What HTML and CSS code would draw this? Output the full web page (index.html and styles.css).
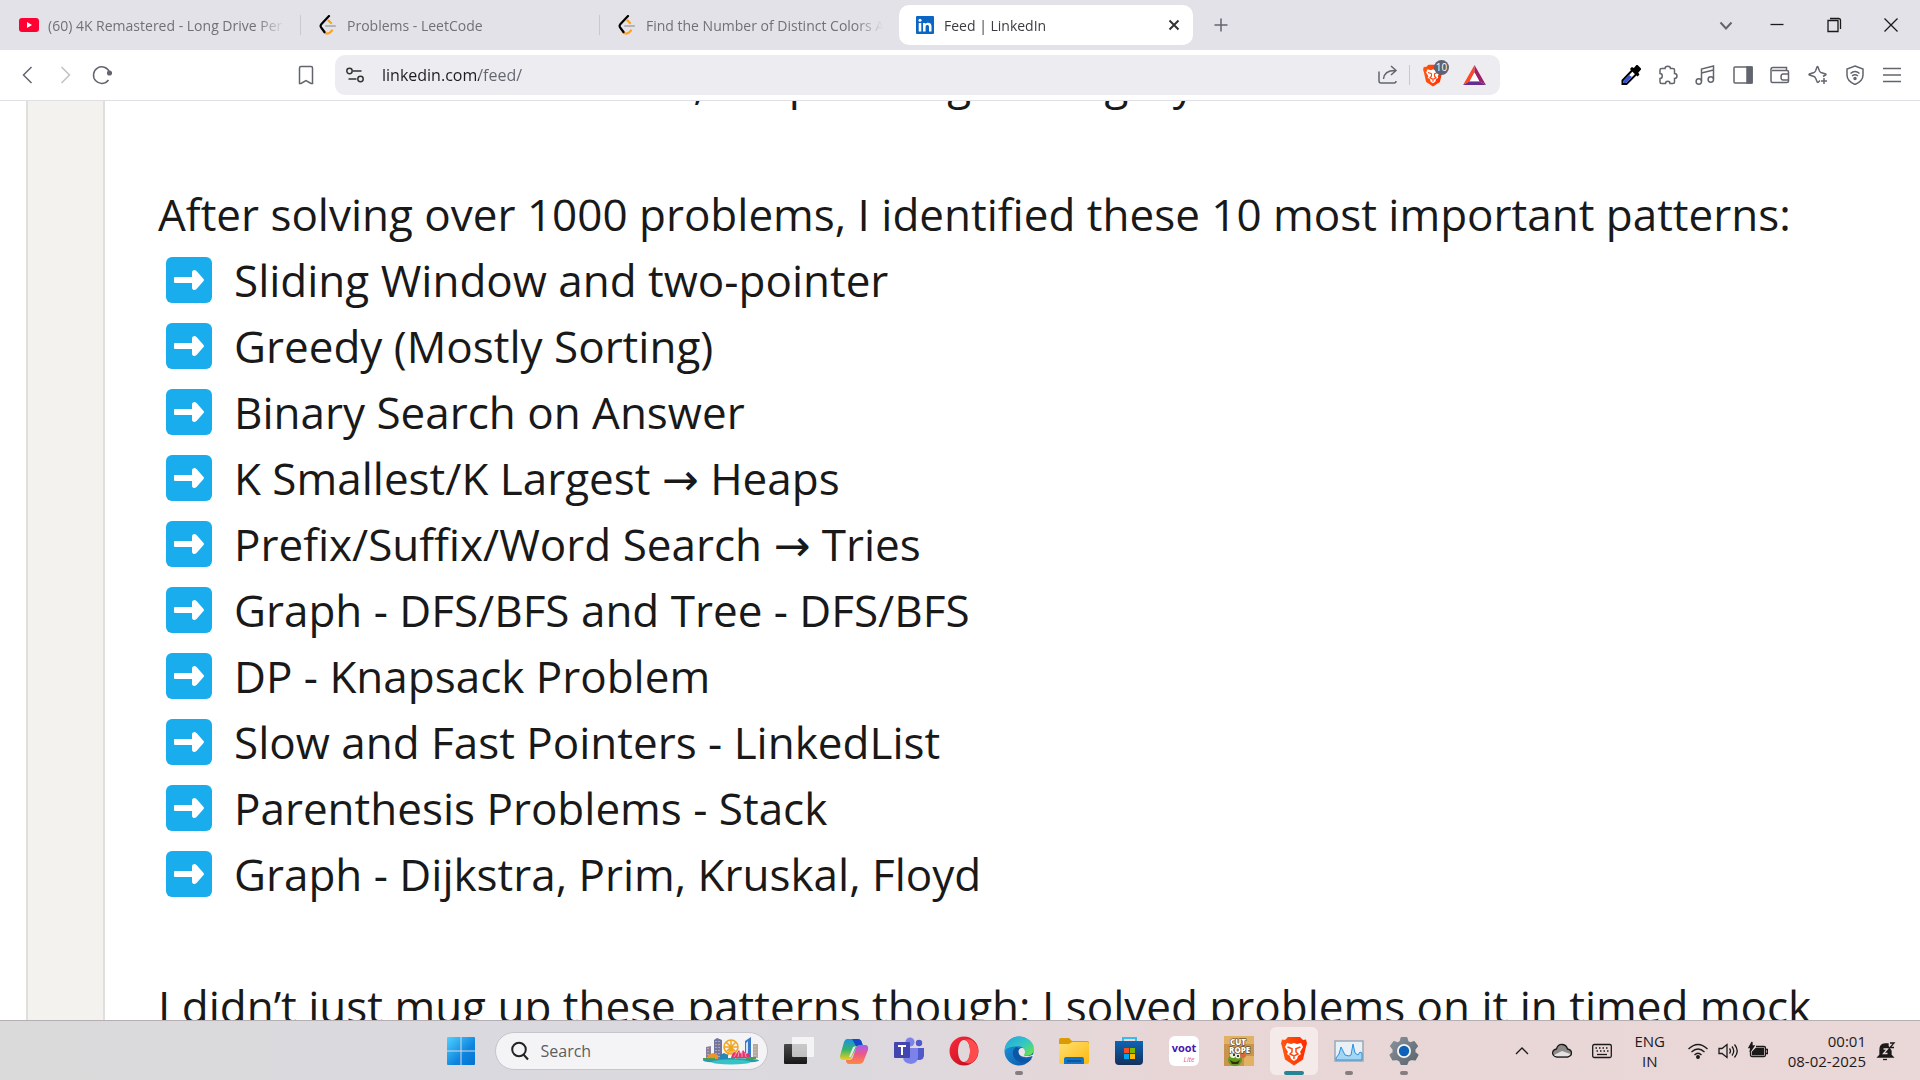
FILE: index.html
```html
<!DOCTYPE html>
<html lang="en">
<head>
<meta charset="utf-8">
<title>Feed | LinkedIn</title>
<link rel="stylesheet" href="styles.css">
</head>
<body>
<svg class="defs" aria-hidden="true">
  <defs>
    <linearGradient id="win" x1="0" y1="0" x2="1" y2="1"><stop offset="0" stop-color="#4fd2ff"/><stop offset=".6" stop-color="#0f85e0"/><stop offset="1" stop-color="#0073d0"/></linearGradient>
    <linearGradient id="copA" x1="0" y1="0" x2="0" y2="1"><stop offset="0" stop-color="#1a8fe8"/><stop offset=".5" stop-color="#35b56a"/><stop offset="1" stop-color="#f2cf1d"/></linearGradient>
    <linearGradient id="copB" x1="0" y1="0" x2="0" y2="1"><stop offset="0" stop-color="#a35cf0"/><stop offset=".5" stop-color="#ee5a86"/><stop offset="1" stop-color="#ff8a3c"/></linearGradient>
    <linearGradient id="opera" x1="0" y1="0" x2="1" y2="1"><stop offset="0" stop-color="#ff2b3c"/><stop offset="1" stop-color="#b40a1c"/></linearGradient>
    <linearGradient id="edgeA" x1="0" y1="0" x2="1" y2="1"><stop offset="0" stop-color="#1fa5e0"/><stop offset=".5" stop-color="#34c6c4"/><stop offset="1" stop-color="#74e838"/></linearGradient>
    <linearGradient id="edgeB" x1="0" y1="0" x2="1" y2="1"><stop offset="0" stop-color="#1b9de2"/><stop offset="1" stop-color="#0c4fa0"/></linearGradient>
    <linearGradient id="folder" x1="0" y1="0" x2="1" y2="1"><stop offset="0" stop-color="#ffe072"/><stop offset="1" stop-color="#fbb90f"/></linearGradient>
    <linearGradient id="store" x1="0" y1="0" x2="0" y2="1"><stop offset="0" stop-color="#0e64b4"/><stop offset="1" stop-color="#15305c"/></linearGradient>
    <linearGradient id="dark" x1="0" y1="0" x2="0" y2="1"><stop offset="0" stop-color="#4a4a4a"/><stop offset="1" stop-color="#181818"/></linearGradient>
    <linearGradient id="lion" x1="0" y1="0" x2="1" y2="0"><stop offset="0" stop-color="#ff5a12"/><stop offset="1" stop-color="#ff2a00"/></linearGradient>
    <linearGradient id="gear" x1="0" y1="0" x2="1" y2="1"><stop offset="0" stop-color="#8a939b"/><stop offset="1" stop-color="#5a646d"/></linearGradient>
    <symbol id="leet" viewBox="0 0 20 20"><g fill="none" stroke-linecap="round" stroke-width="2.2"><path stroke="#b3b3b3" d="M8 11h9"/><path stroke="#ffa116" d="M10.500 5.500L13 8M6 17q3 3 6 .5l2-2"/><path stroke="#000" d="M11 1L3.500 9q-1.800 2 0 4l3 4"/></g></symbol>
    <symbol id="brave" viewBox="0 0 26 30"><path fill="url(#lion)" d="M7 1h12l3 3 3-.5 1 4-1 3-3 13-9 6-9-6-3-13-1-3 1-4 3 .5z"/><path fill="#fff" d="M6 7l4 1 3-1 3 1 4-1 2 4-3 5 1 2-3 2-1 3-3 2-3-2-1-3-3-2 1-2-3-5z"/><path fill="none" stroke="#ff4712" stroke-width="1.500" d="M6.500 11l4 1.500M19.500 11l-4 1.500M11 12v4l-2 2 4 2 4-2-2-2v-4M13 20v3"/></symbol>
    <symbol id="arrow" viewBox="0 0 46 46"><rect width="46" height="46" rx="6" fill="#1aadee"/><path fill="#fff" stroke="#fff" stroke-width="2" stroke-linejoin="round" d="M9 21h18v-6q1-2 3 0l7 8-7 8q-2 2-3 0v-6H9z"/></symbol>
  </defs>
</svg>

<header class="browser">
  <nav class="tabs" aria-label="Tabs">
    <button class="tab tab-first"><svg class="fav" viewBox="0 0 20 20"><rect y="3" width="20" height="14" rx="3" fill="#ff0033"/><path fill="#fff" d="M8 7l5 3-5 3z"/></svg><span class="tab-title">(60) 4K Remastered - Long Drive Per</span></button>
    <button class="tab"><svg class="fav"><use href="#leet"/></svg><span class="tab-title">Problems - LeetCode</span></button>
    <button class="tab"><svg class="fav"><use href="#leet"/></svg><span class="tab-title">Find the Number of Distinct Colors A</span></button>
    <button class="tab active"><svg class="fav" viewBox="0 0 20 20"><rect x="1" y="1" width="18" height="18" rx="1" fill="#0a66c2"/><g fill="#fff"><circle cx="5" cy="5.200" r="1.500"/><path d="M3.700 8h2.600v8.500H3.700zM8 8h2.500v1.200C12 7 16.500 7.200 16.500 11.500v5H14V12c0-2.600-3.400-2.600-3.400 0v4.500H8z"/></g></svg><span class="tab-title">Feed | LinkedIn</span><svg class="tab-close" viewBox="0 0 12 12"><path d="M1.500 1.500l9 9m0-9l-9 9"/></svg></button>
    <button class="icon-btn plus" aria-label="New tab"><svg class="ic" viewBox="0 0 20 20"><path d="M10 3.500v13M3.500 10h13"/></svg></button>
    <span class="spacer"></span>
    <button class="icon-btn win narrow" aria-label="Search tabs"><svg class="ic bold" viewBox="0 0 20 20"><path d="M4.500 7.500l5.500 6 5.500-6"/></svg></button>
    <button class="icon-btn win" aria-label="Minimize"><svg class="ic ink" viewBox="0 0 20 20"><path d="M3.500 9.500h13"/></svg></button>
    <button class="icon-btn win" aria-label="Restore"><svg class="ic ink" viewBox="0 0 20 20"><path d="M6 3.500h8.500q2 0 2 2V14M4 5.500h10v11H4z"/></svg></button>
    <button class="icon-btn win" aria-label="Close"><svg class="ic ink" viewBox="0 0 20 20"><path d="M3.500 3.500l13 13m0-13l-13 13"/></svg></button>
  </nav>
  <div class="toolbar">
    <button class="icon-btn" aria-label="Back"><svg class="ic" viewBox="0 0 20 20"><path d="M13.500 2l-8 8 8 8"/></svg></button>
    <button class="icon-btn faded" aria-label="Forward"><svg class="ic" viewBox="0 0 20 20"><path d="M6.500 2l8 8-8 8"/></svg></button>
    <button class="icon-btn" aria-label="Reload"><svg class="ic" viewBox="0 0 20 20"><path d="M16.500 15A8.300 8.300 0 1 1 17.500 7"/><circle class="solid" cx="17.500" cy="8" r="1.800"/></svg></button>
    <button class="icon-btn bookmark" aria-label="Bookmark"><svg class="ic" viewBox="0 0 20 20"><path d="M5 1.500h10q1.500 0 1.500 1.500v15.500h-1.500L10 15.500l-5 3H3.500V3q0-1.500 1.500-1.500z"/></svg></button>
    <div class="address">
      <svg class="ic tune" viewBox="0 0 20 20"><circle cx="4.500" cy="6" r="2.700"/><path d="M8 6h8.500M3.500 14h8"/><circle cx="15.500" cy="14" r="2.700"/></svg>
      <input class="url" type="text" aria-label="Address" value="linkedin.com/feed/">
      <button class="icon-btn" aria-label="Share"><svg class="ic" viewBox="0 0 20 20"><path d="M1 6.500v9.500q0 2 2 2h13q2 0 2-2M5.500 14C6 8 10 5.500 17 5.500M13 1l5 4.500-5 4.500"/></svg></button>
      <span class="divider"></span>
      <button class="icon-btn shield" aria-label="Brave Shields"><svg class="shield-icon"><use href="#brave"/></svg><span class="badge">10</span></button>
      <button class="icon-btn" aria-label="Rewards"><svg class="triangle" viewBox="0 0 24 21"><path fill="#ff4724" d="M12 0L0 21l7-4 5-9z"/><path fill="#9e1f63" d="M12 0l12 21-7-4-5-9z"/><path fill="#662d91" d="M0 21h24l-7-4H7z"/><path fill="#fff" d="M12 8l5 9H7z"/></svg></button>
    </div>
    <div class="tools">
      <button class="icon-btn" aria-label="Color picker"><svg class="ic" viewBox="0 0 20 20"><path fill="#fff" stroke="#000" stroke-width="2" d="M11.500 5l4 4L5.500 19H1.500v-3.500z"/><path fill="#3454d1" d="M8 10l3 2-6 6H2.500V16z" stroke="none"/><path fill="#000" stroke="#000" d="M10 4l1-1 2 1 3-3.500 3.500 3.500-3 3.500 1 2-1 1z"/></svg></button>
      <button class="icon-btn" aria-label="Extensions"><svg class="ic" viewBox="0 0 20 20"><path d="M3.500 3.500H7C7 .5 12.500.5 12.500 3.500H15q1.500 0 1.500 1.500v3.500c3.300 0 3.300 5 0 5V17q0 1.500-1.500 1.500h-3c0-3-4.500-3-4.500 0H3.500Q2 18.500 2 17v-3.500c3 0 3-5 0-5V5q0-1.500 1.500-1.500z"/></svg></button>
      <button class="icon-btn" aria-label="Playlist"><svg class="ic" viewBox="0 0 20 20"><path d="M6.500 16V4l12-3v13M6.500 8l12-3"/><circle cx="3.800" cy="16.500" r="2.700"/><circle cx="15.800" cy="14.500" r="2.700"/></svg></button>
      <button class="icon-btn" aria-label="Sidebar"><svg class="ic" viewBox="0 0 20 20"><rect x="1" y="2" width="18" height="16" rx="1"/><path class="solid" d="M14 2h5v16h-5z"/></svg></button>
      <button class="icon-btn" aria-label="Wallet"><svg class="ic" viewBox="0 0 20 20"><path d="M16.500 5V2.500H3q-2 0-2 2V16q0 1.500 1.500 1.500H17q1.500 0 1.500-1.500V7q0-1.500-1.500-1.500H2M18.500 9H13q-2 0-2 3t2 3h5.500"/></svg></button>
      <button class="icon-btn" aria-label="Leo"><svg class="ic" viewBox="0 0 20 20"><path d="M12 15.500l-1.500 1.500q-1 1-1.500-.5l-1.500-3.500q-.5-1-1.500-1.500l-4.500-1.500q-1-.5 0-1L6 7.500q1-.5 1.500-1.500L9 2q.5-1 1 0l1.500 4q.5 1 1.500 1.500l4.500 1.500q1 .5 0 1L15 11.500"/><path d="M16 13v6m-3-3h6"/></svg></button>
      <button class="icon-btn" aria-label="VPN"><svg class="ic" viewBox="0 0 20 20"><path d="M10 1l8 3v6q0 6-8 9.500Q2 16 2 10V4zM5.500 8.500q4.500-4 9 0M7 11q3-2.500 6 0"/><circle class="solid" cx="10" cy="13.500" r="1"/></svg></button>
      <button class="icon-btn" aria-label="Menu"><svg class="ic" viewBox="0 0 20 20"><path d="M1 3.500h18M1 10h18M1 16.500h18"/></svg></button>
    </div>
  </div>
</header>

<main class="viewport">
  <div class="gutter"></div>
  <article class="post">
    <p>I could list each idea there, keep leaving a category</p>
    <p>After solving over 1000 problems, I identified these 10 most important patterns:</p>
    <ul class="patterns">
      <li><svg class="bullet"><use href="#arrow"/></svg><span>Sliding Window and two-pointer</span></li>
      <li><svg class="bullet"><use href="#arrow"/></svg><span>Greedy (Mostly Sorting)</span></li>
      <li><svg class="bullet"><use href="#arrow"/></svg><span>Binary Search on Answer</span></li>
      <li><svg class="bullet"><use href="#arrow"/></svg><span>K Smallest/K Largest <span class="to">→</span> Heaps</span></li>
      <li><svg class="bullet"><use href="#arrow"/></svg><span>Prefix/Suffix/Word Search <span class="to">→</span> Tries</span></li>
      <li><svg class="bullet"><use href="#arrow"/></svg><span>Graph - DFS/BFS and Tree - DFS/BFS</span></li>
      <li><svg class="bullet"><use href="#arrow"/></svg><span>DP - Knapsack Problem</span></li>
      <li><svg class="bullet"><use href="#arrow"/></svg><span>Slow and Fast Pointers - LinkedList</span></li>
      <li><svg class="bullet"><use href="#arrow"/></svg><span>Parenthesis Problems - Stack</span></li>
      <li><svg class="bullet"><use href="#arrow"/></svg><span>Graph - Dijkstra, Prim, Kruskal, Floyd</span></li>
    </ul>
    <p>I didn’t just mug up these patterns though; I solved problems on it in timed mock</p>
  </article>
</main>

<footer class="taskbar">
  <div class="side"></div>
  <div class="apps">
    <button class="app" aria-label="Start"><svg viewBox="0 0 30 30"><path fill="url(#win)" d="M1 2q0-1 1-1h12.500v13.500H1zM15.500 1H28q1 0 1 1v12.500H15.500zM1 15.500h13.500V29H2q-1 0-1-1zM15.500 15.500H29V28q0 1-1 1H15.500z"/></svg></button>
    <div class="search">
      <svg class="lens" viewBox="0 0 20 20"><circle cx="9" cy="8.500" r="6.800"/><path d="M13.500 13.500l4.500 5"/></svg>
      <input type="text" aria-label="Search" placeholder="Search">
      <svg class="city" viewBox="0 0 58 28"><ellipse cx="29" cy="23.500" rx="28" ry="2.500" fill="#2a9aa8"/><ellipse cx="29" cy="25" rx="19" ry="2.500" fill="#35c3c8"/><path fill="#73749f" d="M12 3l3-2 5 2v19h-8z"/><path fill="#8a7f9c" d="M4 10l5-1v13H4z"/><path fill="#b5a9a0" d="M51 7h5v14h-5z"/><path fill="#3878c8" d="M43 4l6-4v21h-6z"/><path fill="#cfe3f5" d="M44 6l2-2v17h-2z"/><path stroke="#ddd4c8" stroke-dasharray="1 2" d="M14 4v16M17 4v16M6 11v10M53 9v11"/><g fill="none" stroke="#f2a51c" stroke-width="1.500"><circle cx="29" cy="10" r="7"/><path d="M22 10h14M29 3v14M24 5l10 10M34 5L24 15M29 10l-5 12M29 10l5 12"/></g><path fill="#e8316f" d="M29 21q1-5 4-6l1 2 3-4 2 4 2-4 3 4 2-1q2 2 2 5z"/><path stroke="#f9b9ce" stroke-width=".8" d="M32 20l2-3M36 20l1-5M40 20v-5M44 20l-1-4"/><path fill="#ef9424" d="M6 18l5-2 5 2v4H6z"/><path fill="#2686b5" d="M18 18l4-2 4 2v4h-8z"/><path fill="#4aa04a" d="M1 21h12v2H1zM44 20h10v2H44z"/></svg>
    </div>
    <button class="app" aria-label="Task view"><svg viewBox="0 0 30 30"><rect y="8" width="23" height="20" rx="1" fill="url(#dark)"/><rect x="8" y="1" width="22" height="20" rx="1" fill="#fff" fill-opacity=".7"/></svg></button>
    <button class="app" aria-label="Copilot"><svg viewBox="0 0 30 30"><path fill="url(#copA)" d="M8 3h11q3 0 4 4l1 3h-6l-5 11q-1 3-4 3H4q-3 0-3-4L5 6q1-3 3-3z"/><path fill="#1746c8" d="M13 3h6q3 0 4 4l1 3h-7z"/><path fill="url(#copB)" d="M20 9h6q4 0 3 5l-4 10q-1 4-5 4H10q-3 0-3-4h4q2 0 3-3l3-9q1-3 3-3z"/><path fill="#e8e3ee" d="M17 10l-5 11h-2l4-10z"/></svg></button>
    <button class="app" aria-label="Teams"><svg viewBox="0 0 30 30"><circle cx="16" cy="6" r="4.500" fill="#7b83eb"/><circle cx="25" cy="7" r="3.200" fill="#5059c9"/><path fill="#5059c9" d="M20 12h10v7q0 5-5 5h-5z"/><path fill="#7b83eb" d="M9 12h15v9q0 6-7 7-8-1-8-7z"/><rect y="6" width="16" height="16" rx="1" fill="#4346ae"/><path stroke="#fff" stroke-width="2" d="M4 10h8M8 10v9"/></svg></button>
    <button class="app" aria-label="Opera"><svg viewBox="0 0 30 30"><path fill="url(#opera)" fill-rule="evenodd" d="M15 .5a14.500 14.500 0 1 0 0 29 14.500 14.500 0 1 0 0-29zM15 4c-8 0-8 22 0 22s8-22 0-22z"/><path fill="#ff4b4b" d="M15 4c4-2 9 0 11 3 5 5 4 14-1 18-3 3-7 3-10 1 8 0 8-22 0-22z"/></svg></button>
    <button class="app running" aria-label="Edge"><svg viewBox="0 0 30 30"><circle cx="15" cy="15" r="14.500" fill="url(#edgeB)"/><path fill="url(#edgeA)" d="M1 12C3 4 9 0 16 .5c9 .5 14 7 14 12 0 6-5 8-9 7-3-1-2-2-1-4 1-4-4-6-8-5-5 0-9 1-11 4z"/><path fill="#0d55a5" d="M12 11c-5 4-4 11 2 14 5 3 11 1 14-2-6 2-12-1-13-6q-.5-3 2-4z"/><path fill="#ebe5e8" d="M19 12c-5-1-6 5-2 8 4 2 9 1 11 0l2 1v-3c-3 2-9 3-10 1 1-2 2-4-1-7z"/></svg></button>
    <button class="app" aria-label="File Explorer"><svg viewBox="0 0 30 30"><path fill="#dc9a05" d="M0 4q0-2 2-2h8l3 3h15q2 0 2 2v6H0z"/><path fill="url(#folder)" d="M0 8h10l3-2h15q2 0 2 2v18q0 2-2 2H2q-2 0-2-2z"/><path fill="#1073c8" d="M5 28v-5q0-2 2-2h16q2 0 2 2v5z"/><path stroke="#0c4d92" stroke-width="1.500" d="M8 25h14"/></svg></button>
    <button class="app" aria-label="Store"><svg viewBox="0 0 30 30"><path fill="none" stroke="#35bdf2" stroke-width="2" d="M9 6V2h13v4"/><path fill="url(#store)" d="M1 5h28v20q0 4-4 4H5q-4 0-4-4z"/><path fill="#f25022" d="M10 12h5v5h-5z"/><path fill="#7fba00" d="M16 12h5v5h-5z"/><path fill="#00a4ef" d="M10 18h5v5h-5z"/><path fill="#ffb900" d="M16 18h5v5h-5z"/></svg></button>
    <button class="app"><span class="voot"><b>voot</b><i>Lite</i></span></button>
    <button class="app" aria-label="Cut the Rope"><svg viewBox="0 0 30 30"><path fill="#c9954e" d="M0 0h30v30H0z"/><path fill="#e2b264" d="M0 0h30v8H0zM20 20h10v10H20z"/><ellipse cx="11" cy="24" rx="7" ry="6" fill="#5f991c"/><circle cx="9" cy="19" r="3" fill="#e9f2dc"/><circle cx="14" cy="20" r="2.500" fill="#e9f2dc"/><circle cx="10" cy="19" r="1"/><circle cx="14" cy="20" r="1"/><path fill="#3b2610" d="M6 24q5 4 10 0l-2 4H8z"/><circle cx="19" cy="19" r="3" fill="#d9683d"/><g class="rope"><text x="6" y="9">CUT</text><text x="5" y="17">ROPE</text></g></svg></button>
    <button class="app current running" aria-label="Brave"><svg viewBox="0 0 30 30"><use href="#brave" x="2" width="26" height="30"/></svg></button>
    <button class="app running" aria-label="Resource Monitor"><svg viewBox="0 0 30 30"><rect x="1" y="5" width="28" height="20" fill="#e8f1f8" stroke="#9aa9b6" stroke-width="1.500"/><path fill="#a3d5f5" stroke="#2f8fd8" d="M2 22l3-4 2-7 2 4 2 4 4 1 2-1 2-11 2 9 3 2 2-3 2 1v7H2z"/></svg></button>
    <button class="app running" aria-label="Settings"><svg viewBox="0 0 30 30"><path fill="url(#gear)" stroke="url(#gear)" stroke-width="2" stroke-linejoin="round" d="M12.500 2h5l1 4 3 1.500L25 6l3 4-2.500 3v3.500L28.500 19 26 23.500 22 23l-3 1.500-1.500 3.500h-5L11 24.500 8 23l-4 .5L1.500 19l3-2.500V13L2 10l3-4 3.500 1.500 3-1.500z"/><circle cx="15" cy="15" r="7" fill="#f4f7fa"/><circle cx="15" cy="15" r="5.200" fill="#0f61b8"/></svg></button>
  </div>
  <div class="side tray">
    <svg class="ic ink" viewBox="0 0 20 20"><path d="M4 13l6-6 6 6"/></svg>
    <svg class="ic ink" viewBox="0 0 20 20"><path fill="#8e8a8a" d="M5 16q-4-.5-4.500-4Q1 8.500 4.500 8 6 3 10.500 3.500q4 .5 5 4.500 4 1 4 4t-4 4z"/><path fill="#e6e1e1" stroke="none" d="M2 14l8-4 8.500 3q-1 2-3 2.300H5q-2 0-3-1.300z"/></svg>
    <svg class="ic ink" viewBox="0 0 20 20"><rect x=".7" y="3.500" width="18.600" height="13" rx="1.500"/><path stroke-dasharray="1.500 2" d="M3.500 7h14M4.500 10h12"/><path d="M5 13.500h10"/></svg>
    <span class="lang">ENG<br>IN</span>
    <div class="status">
      <svg class="ic ink" viewBox="0 0 20 20"><path d="M.5 8q9.500-9 19 0M3.500 11q6.500-6 13 0M6.500 14q3.500-3.500 7 0"/><circle class="solid" cx="10" cy="16" r="1.300"/></svg>
      <svg class="ic ink" viewBox="0 0 20 20"><path d="M1 7.500h3l5-4v13l-5-4H1zM11.500 7.500q2 2.500 0 5M14 5.500q3.500 4.500 0 9M16.500 3.500q5.500 6.500 0 13"/></svg>
      <svg class="ic ink" viewBox="0 0 20 20"><path d="M8 5.500h8q1.500 0 1.500 1.500v7q0 1.500-1.500 1.500H4q-1.500 0-1.500-1.500v-3M18 8.500h1.500v4H18"/><path class="solid" d="M8 7.500h7.500v6h-11V11zM4 1l-3 5.500h2L2 11l4-6H4z"/></svg>
    </div>
    <time class="clock">00:01<br>08-02-2025</time>
    <svg class="ic ink bell" viewBox="0 0 20 20"><path class="solid" d="M4 14V9q0-6 5-6h3v2l3 5v4l2 2H2z"/><path d="M7 18.500h4"/><path stroke="#ead7d8" d="M7.500 8h4l-4 4.500h4"/><path d="M14 2h4l-4 4.500h4"/></svg>
  </div>
</footer>
</body>
</html>
```
FILE: styles.css
```css
* { box-sizing: border-box; }
html, body { height: 100%; }
body {
  margin: 0;
  display: flex;
  flex-direction: column;
  overflow: hidden;
  background: #fff;
  color: #191919;
  font-family: "Open Sans", "Noto Sans", sans-serif;
  font-size: 14px;
}
button, input { font: inherit; color: inherit; border: 0; padding: 0; background: none; }
svg { display: block; flex: none; }
p, ul { margin: 0; padding: 0; list-style: none; }
.defs { position: absolute; width: 0; height: 0; }
.spacer { flex: 1; }

.browser { flex: none; border-bottom: 1px solid #dfdfe4; color: #62656e; }
.tabs { display: flex; align-items: center; height: 50px; background: #e3e2e8; padding-right: 1px; }
.tab { display: flex; align-items: center; flex: 0 1 299px; min-width: 0; height: 40px; padding: 0 16px 0 17px; gap: 9px; position: relative; text-align: left; color: #707178; }
.tab-first { flex-basis: 301px; padding-left: 19px; }
.tab:nth-child(-n+2)::after { content: ""; position: absolute; right: 0; top: 10px; height: 20px; width: 1px; background: #c8c8ce; }
.tab .fav { width: 20px; height: 20px; }
.tab-title { flex: 1; min-width: 0; overflow: hidden; white-space: nowrap; mask-image: linear-gradient(90deg, #000 88%, transparent); }
.tab.active { flex-basis: 294px; background: #fff; border-radius: 10px; color: #3b3b41; padding: 0 13px 0 16px; }
.tab-close { width: 12px; height: 12px; fill: none; stroke: #333; stroke-width: 2; }
.icon-btn { display: flex; align-items: center; justify-content: center; flex: none; width: 37px; height: 37px; position: relative; }
.plus { margin-left: 9px; }
.win { width: 57px; }
.narrow { width: 45px; }
.ic { width: 20px; height: 20px; fill: none; stroke: #62656e; stroke-width: 1.5; }
.ic.bold { stroke-width: 2; }
.ic.ink { stroke: #1a1a1a; stroke-width: 1.3; }
.ic .solid { fill: #62656e; }
.ic.ink .solid { fill: #1a1a1a; }
.faded { opacity: .4; }

.toolbar { display: flex; align-items: center; height: 50px; padding: 0 9px; }
.bookmark { margin-left: 167px; margin-right: 11px; }
.address { flex: 0 1 1165px; height: 40px; display: flex; align-items: center; border-radius: 10px; background: #edecf1; padding: 0 7px 0 10px; }
.ic.tune { stroke: #333; }
.url { flex: 1; min-width: 0; margin-left: 17px; font-size: 16px; outline: 0; background: linear-gradient(90deg, #1b1b20 97px, #62656e 97px); background-clip: text; color: transparent; }
.divider { width: 1px; height: 20px; margin: 0 4px 0 3px; background: #c8c8ce; }
.shield { margin-right: 5px; }
.shield-icon { width: 20px; height: 23px; }
.badge { position: absolute; left: 20px; top: 3px; width: 15px; height: 15px; border-radius: 8px; background: #5f6272; color: #fff; font-size: 10px; line-height: 15px; text-align: center; }
.triangle { width: 23px; height: 20px; }
.tools { display: flex; justify-content: space-between; width: 299px; margin-left: auto; }

.viewport { flex: 1; min-height: 0; overflow: hidden; display: flex; padding-left: 26px; }
.gutter { flex: none; width: 79px; border: solid #dfdfdb; border-width: 0 2px; background: #f3f2ee; }
.post { flex: 1; margin-top: -52px; padding-left: 53px; font-size: 44px; line-height: 66px; white-space: nowrap; }
.post p + p, .patterns + p { margin-top: 66px; }
.patterns li { display: flex; align-items: center; gap: 22px; padding-left: 8px; height: 66px; }
.bullet { width: 46px; height: 46px; }
.to { font-family: "DejaVu Sans", sans-serif; line-height: 1; }

.taskbar { flex: none; height: 60px; display: flex; align-items: center; border-top: 1px solid #b5afb4; background: linear-gradient(90deg, #dadada 0, #dad9df 25%, #dcd9de 45%, #e8d6d7 60%, #ead7d8 100%); }
.side { flex: 1 1 0; }
.apps { display: flex; align-items: center; padding-right: 31px; }
.app { width: 55px; height: 48px; display: flex; align-items: center; justify-content: center; position: relative; }
.app svg { width: 30px; height: 30px; }
.running::after { content: ""; position: absolute; bottom: 0; left: 23px; width: 8px; height: 4px; border-radius: 2px; background: #857d80; }
.current { width: 48px; margin: 0 4px 0 3px; background: #f4eaea; border-radius: 6px; }
.current::after { left: 14px; width: 20px; background: #258594; }
.search { display: flex; align-items: center; width: 273px; height: 38px; margin: 0 4px 0 6px; padding: 0 7px 0 14px; border-radius: 19px; border: 1px solid #c6c5cb; background: #f4f4f6; }
.search input { flex: 1; min-width: 0; margin-left: 11px; font-size: 16px; outline: 0; }
.search input::placeholder { color: #5d5d60; opacity: 1; }
.lens { width: 20px; height: 20px; fill: none; stroke: #222; stroke-width: 2; }
.city { width: 58px; height: 28px; }
.voot { width: 30px; height: 30px; border-radius: 6px; background: #fff; display: block; color: #4a16b0; font-size: 11px; line-height: 14px; padding-top: 5px; text-align: center; }
.voot b, .voot i { display: block; }
.voot i { color: #ee5277; font-size: 7px; line-height: 9px; padding-left: 10px; }
.rope { fill: #fff; stroke: #3b2c1d; stroke-width: 1px; paint-order: stroke; font-size: 8px; font-weight: 800; }
.tray { display: flex; align-items: center; justify-content: flex-end; gap: 20px; padding-right: 24px; font-size: 15px; line-height: 20px; color: #1d1a1b; }
.lang { width: 36px; text-align: center; }
.status { display: flex; gap: 10px; }
.clock { text-align: right; white-space: nowrap; }
.bell { margin-left: -10px; }
```
